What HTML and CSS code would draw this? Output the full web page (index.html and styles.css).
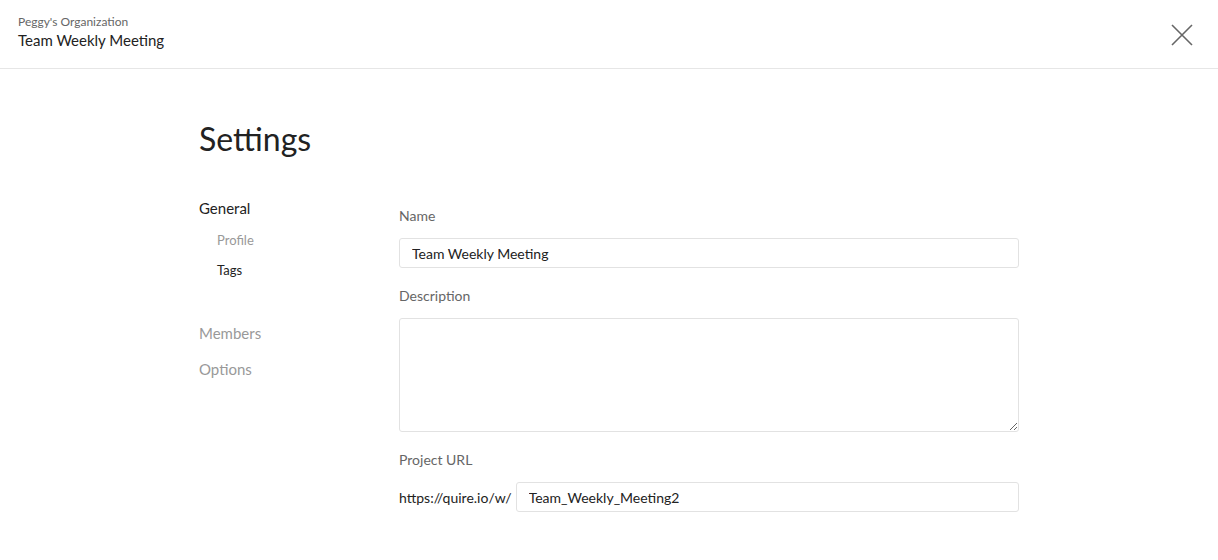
FILE: index.html
```html
<!DOCTYPE html>
<html>
<head>
<meta charset="utf-8">
<link rel="stylesheet" href="styles.css">
</head>
<body>
<header class="topbar">
  <div class="titles">
    <div class="org">Peggy's Organization</div>
    <div class="project">Team Weekly Meeting</div>
  </div>
  <button class="close" aria-label="Close">
    <svg width="22" height="22" viewBox="0 0 22 22"><path d="M1 1L21 21M21 1L1 21" stroke="#666" stroke-width="1.6" fill="none"/></svg>
  </button>
</header>
<main class="page">
  <h1 class="heading">Settings</h1>
  <div class="cols">
    <nav class="nav">
      <div class="nav-main active">General</div>
      <div class="nav-sub">Profile</div>
      <div class="nav-sub active">Tags</div>
      <div class="nav-main members">Members</div>
      <div class="nav-main">Options</div>
    </nav>
    <form class="form">
      <label class="label">Name</label>
      <input class="field" type="text" value="Team Weekly Meeting">
      <label class="label">Description</label>
      <textarea class="field area"></textarea>
      <label class="label">Project URL</label>
      <div class="url-row">
        <span class="prefix">https://quire.io/w/</span>
        <input class="field url" type="text" value="Team_Weekly_Meeting2">
      </div>
    </form>
  </div>
</main>
</body>
</html>
```
FILE: styles.css
```css
* { box-sizing: border-box; }
html, body { margin: 0; padding: 0; background: #fff; }
body { font-family: Lato, "Noto Sans", sans-serif; color: #222; }

.topbar {
  height: 69px;
  border-bottom: 1px solid #e6e6e6;
  display: flex;
  justify-content: space-between;
  align-items: flex-start;
  padding: 14px 25px 0 18px;
}
.org { font-size: 12px; color: #666; line-height: 15px; }
.project { font-size: 15px; color: #222; line-height: 20px; margin-top: 1px; }
.close {
  border: 0; background: none; padding: 0; margin-top: 10px;
  width: 22px; height: 22px; cursor: pointer;
}
.close svg { display: block; }

.page { padding: 50px 0 0 199px; }
.heading { font-size: 32px; font-weight: 400; margin: 0; line-height: 40px; color: #222; }
.cols { display: flex; margin-top: 39px; }
.nav { width: 200px; }
.nav-main { font-size: 15px; color: #999; line-height: 20px; margin-bottom: 16px; }
.nav-main.active { color: #222; margin-bottom: 13px; }
.nav-sub { font-size: 13px; color: #999; padding-left: 18px; line-height: 18px; margin-bottom: 12px; }
.nav-sub.active { color: #222; }
.nav-main.members { margin-top: 44px; }

.form { width: 620px; display: flex; flex-direction: column; padding-top: 9px; }
.label { font-size: 14px; color: #666; line-height: 18px; margin-bottom: 13px; }
.field {
  font-family: Lato, "Noto Sans", sans-serif;
  font-size: 14px; color: #222;
  border: 1px solid #e2e2e2; border-radius: 3px;
  height: 30px; padding: 0 12px; outline: none;
  margin-bottom: 19px; width: 100%;
}
.area { height: 114px; resize: vertical; padding: 8px 12px; margin-bottom: 19px; }
.url-row { display: flex; align-items: center; }
.prefix { font-size: 14px; color: #222; margin-right: 4px; white-space: nowrap; }
.url { flex: 1; margin-bottom: 0; }
```
